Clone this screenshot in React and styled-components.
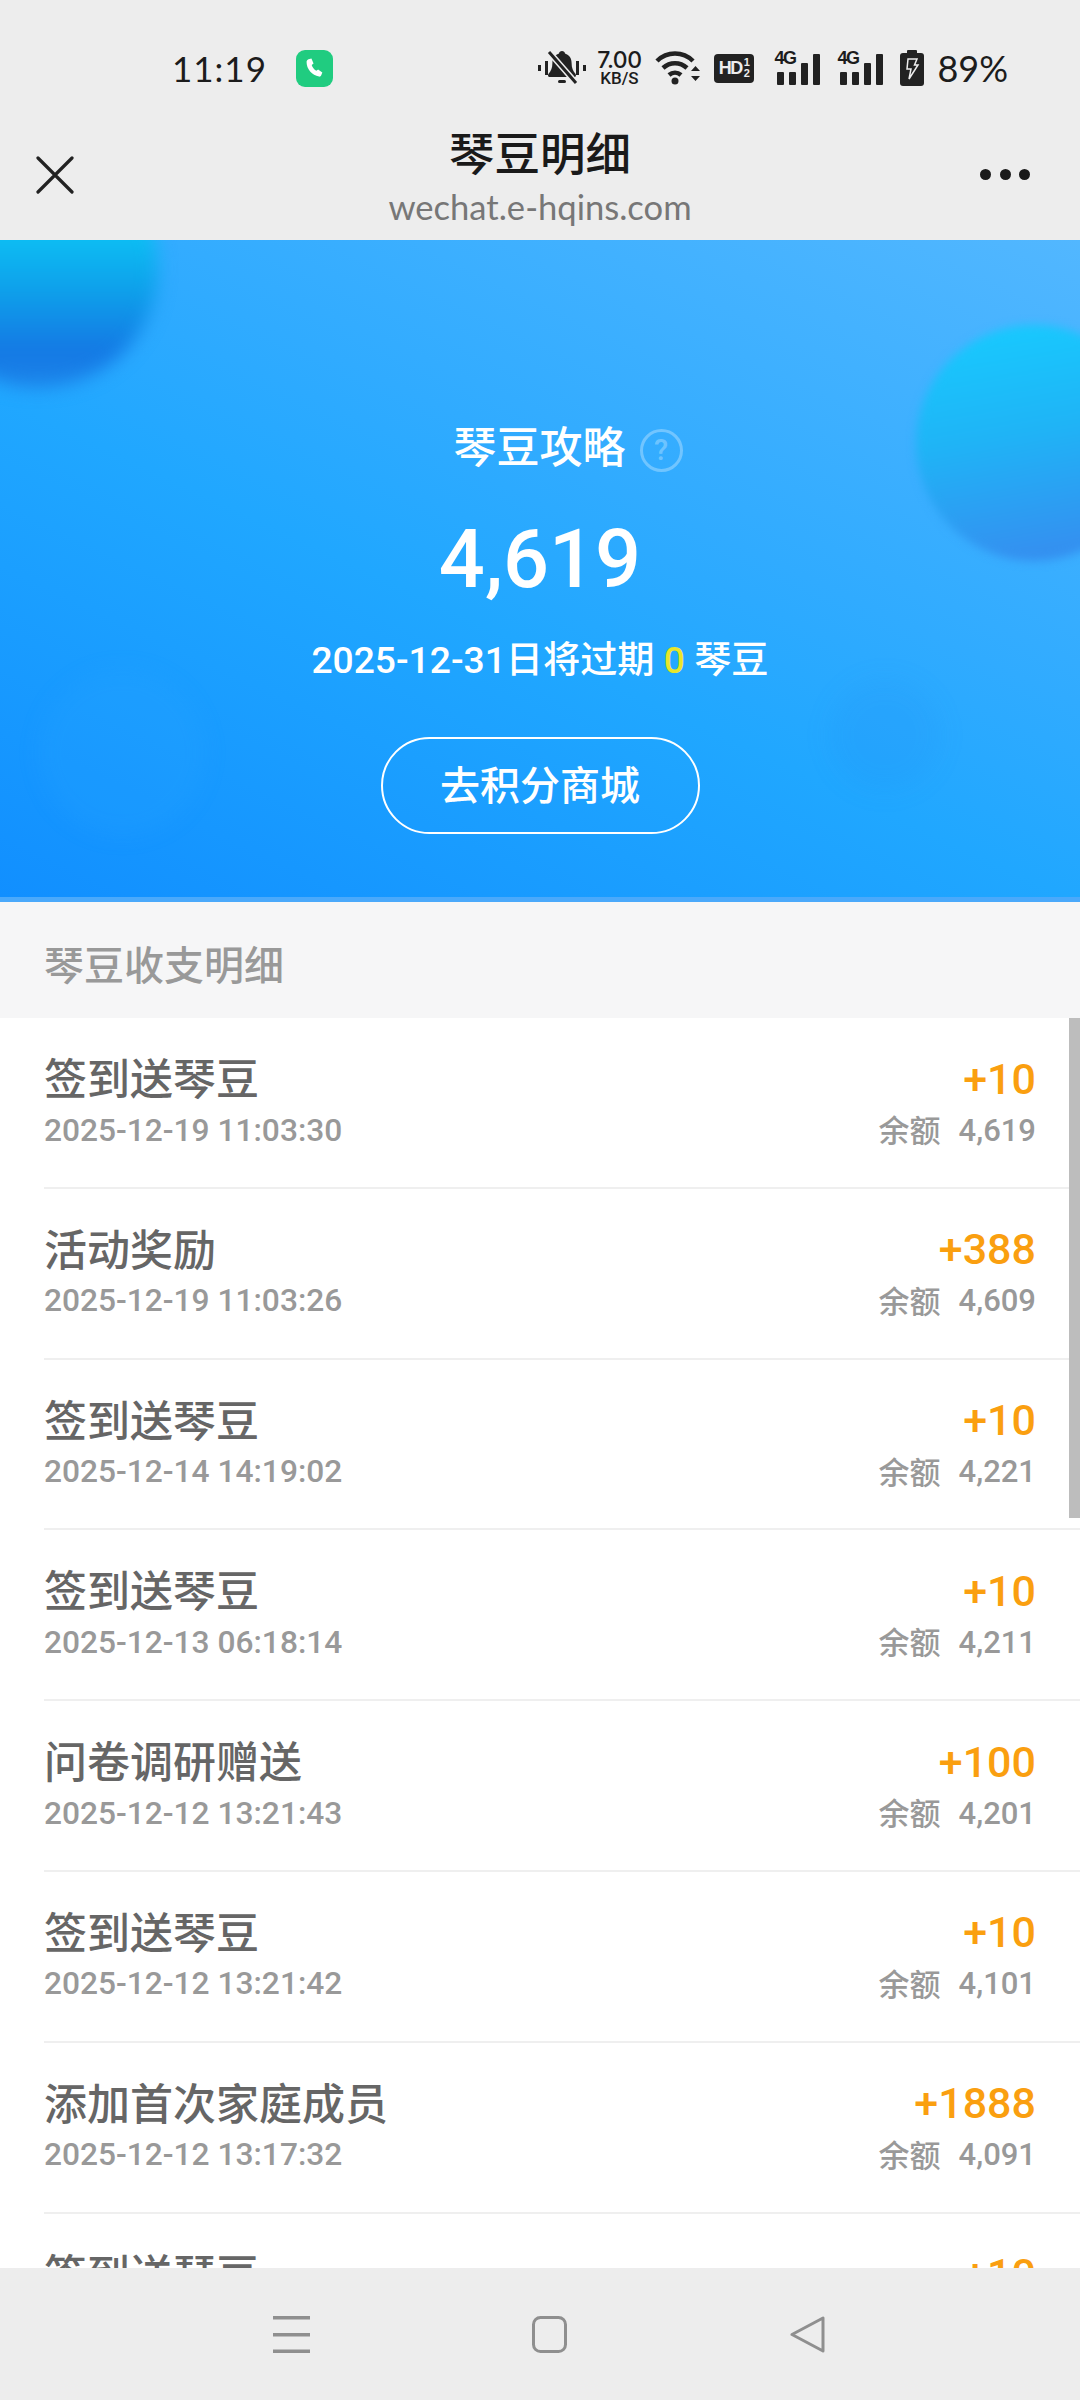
import React from "react";
import styled, { createGlobalStyle } from "styled-components";

const Global = createGlobalStyle`
  html, body { margin: 0; padding: 0; background: #fff; }
  * { box-sizing: border-box; }
  body { font-family: Roboto, "Noto Sans CJK SC", sans-serif; }
`;

const Page = styled.div`
  width: 1080px;
  height: 2400px;
  display: flex;
  flex-direction: column;
  overflow: hidden;
`;

const Top = styled.div`
  background: #ededed;
  height: 240px;
  flex: none;
`;

const StatusBar = styled.div`
  height: 106px;
  padding: 30px 72px 0 172px;
  display: flex;
  align-items: center;
  color: #1c1c1c;
`;

const Time = styled.span`
  font: 400 35px/1 Lato, sans-serif;
  letter-spacing: 1px;
`;

const CallBadge = styled.div`
  width: 37px;
  height: 37px;
  margin-left: 29px;
  border-radius: 9px;
  background: #20cc80;
  display: flex;
  align-items: center;
  justify-content: center;
`;

const StatusIcons = styled.div`
  margin-left: auto;
  display: flex;
  align-items: center;
`;

const Speed = styled.div`
  width: 50px;
  margin: 0 11px 0 8px;
  display: flex;
  flex-direction: column;
  align-items: center;
  font: 500 23px/20px Inter, sans-serif;
  letter-spacing: -0.5px;
  small {
    font: 500 17px/16px Roboto, sans-serif;
    letter-spacing: 0;
  }
`;

const HdBadge = styled.div`
  width: 40px;
  height: 29px;
  margin: 0 20px 0 13px;
  background: #222;
  border-radius: 4px;
  color: #ededed;
  display: flex;
  align-items: center;
  justify-content: center;
  font: 700 18px/1 "Liberation Sans", sans-serif;
  letter-spacing: -1.5px;
`;

const Fraction = styled.span`
  display: flex;
  flex-direction: column;
  align-items: center;
  margin-left: 2px;
  font-size: 11px;
  line-height: 11px;
  letter-spacing: 0;
`;

const SignalWrap = styled.div`
  position: relative;
  width: 46px;
  height: 33px;
  margin-right: 17px;
  span {
    position: absolute;
    left: 0;
    top: -3px;
    font: 700 18px/1 "Liberation Sans", sans-serif;
    letter-spacing: -1.5px;
  }
  svg {
    display: block;
  }
`;

const Percent = styled.span`
  margin-left: 13px;
  font: 400 36px/1 Lato, sans-serif;
`;

const NavBar = styled.div`
  height: 134px;
  padding: 0 50px;
  display: grid;
  grid-template-columns: 50px 1fr 50px;
  align-items: center;
`;

const CloseIcon = styled.svg`
  display: block;
  margin: 4px 0 0 -14px;
`;

const NavCenter = styled.div`
  text-align: center;
  margin-top: 8px;
`;

const NavTitle = styled.div`
  font-size: 45.5px;
  line-height: 60px;
  font-weight: 500;
  color: #1a1a1a;
`;

const NavHost = styled.div`
  font: 400 34.6px/42px Lato, sans-serif;
  color: #777;
`;

const Dots = styled.div`
  display: flex;
  justify-content: space-between;
  margin-top: 2px;
  span {
    width: 11px;
    height: 11px;
    border-radius: 50%;
    background: #1a1a1a;
  }
`;

const Hero = styled.div`
  position: relative;
  height: 662px;
  flex: none;
  overflow: hidden;
  display: flex;
  flex-direction: column;
  align-items: center;
  padding-top: 176px;
  color: #fff;
  background: linear-gradient(25deg, #118fff 0%, #20a7ff 43%, #30abff 60%, #52b7ff 100%);
  border-bottom: 5px solid #4aa9fb;
`;

const Ball = styled.div`
  position: absolute;
  left: ${(p) => p.$x}px;
  top: ${(p) => p.$y}px;
  width: ${(p) => p.$size}px;
  height: ${(p) => p.$size}px;
  border-radius: 50%;
  filter: blur(${(p) => p.$blur || 4}px);
  background: ${(p) => p.$bg};
`;

const HeroTitle = styled.div`
  position: relative;
  display: flex;
  align-items: center;
  font-size: 43px;
  line-height: 64px;
  font-weight: 500;
  margin-left: 56px;
`;

const Help = styled.span`
  width: 43px;
  height: 43px;
  margin-left: 14px;
  margin-top: 4px;
  border-radius: 50%;
  border: 3px solid rgba(255, 255, 255, 0.3);
  color: rgba(255, 255, 255, 0.3);
  display: flex;
  align-items: center;
  justify-content: center;
  font-size: 29px;
  line-height: 1;
`;

const Total = styled.div`
  position: relative;
  font-size: 81px;
  line-height: 100px;
  font-weight: 500;
  margin-top: 30px;
`;

const Expire = styled.div`
  position: relative;
  font-size: 37.2px;
  line-height: 50px;
  font-weight: 500;
  margin-top: 25px;
  b {
    color: #e8e62a;
    font-weight: 500;
  }
`;

const ShopButton = styled.div`
  position: relative;
  width: 319px;
  height: 97px;
  margin-top: 52px;
  padding-bottom: 5px;
  border: 2px solid #fff;
  border-radius: 49px;
  display: flex;
  align-items: center;
  justify-content: center;
  font-size: 40px;
  font-weight: 500;
`;

const SectionHead = styled.div`
  height: 116px;
  flex: none;
  padding: 5px 0 0 44px;
  display: flex;
  align-items: center;
  background: #f6f6f7;
  color: #999;
  font-size: 40px;
  font-weight: 500;
`;

const ListWrap = styled.div`
  position: relative;
  flex: 1;
  min-height: 0;
  overflow: hidden;
  background: #fff;
`;

const ScrollThumb = styled.div`
  position: absolute;
  top: 0;
  right: 0;
  width: 11px;
  height: 500px;
  background: #bdbdbd;
`;

const Row = styled.div`
  height: 170.8px;
  margin-left: 44px;
  padding: 26px 44px 0 0;
  border-bottom: 2px solid #efefef;
  display: grid;
  grid-template-columns: 1fr auto;
  grid-template-rows: 64px 44px;
  align-items: center;
`;

const RowTitle = styled.div`
  font-size: 43px;
  font-weight: 500;
  color: #666;
`;

const Amount = styled.div`
  justify-self: end;
  margin-top: 5px;
  font-size: 43px;
  font-weight: 500;
  color: #fa9f10;
`;

const RowDate = styled.div`
  font-size: 31.7px;
  font-weight: 500;
  color: #999;
`;

const Balance = styled.div`
  justify-self: end;
  display: flex;
  align-items: center;
  gap: 18px;
  font-size: 31px;
  font-weight: 500;
  color: #999;
  em {
    font-style: normal;
    font-size: 31px;
    margin-top: -3px;
  }
`;

const BottomNav = styled.div`
  height: 132px;
  flex: none;
  background: #ededed;
  position: relative;
  display: grid;
  grid-template-columns: 273px 37px 222px 34px 224px 34px;
  padding-top: 48px;
  svg {
    display: block;
  }
`;

const rows = [
  ["签到送琴豆", "+10", "2025-12-19 11:03:30", "4,619"],
  ["活动奖励", "+388", "2025-12-19 11:03:26", "4,609"],
  ["签到送琴豆", "+10", "2025-12-14 14:19:02", "4,221"],
  ["签到送琴豆", "+10", "2025-12-13 06:18:14", "4,211"],
  ["问卷调研赠送", "+100", "2025-12-12 13:21:43", "4,201"],
  ["签到送琴豆", "+10", "2025-12-12 13:21:42", "4,101"],
  ["添加首次家庭成员", "+1888", "2025-12-12 13:17:32", "4,091"],
  ["签到送琴豆", "+10", "2025-12-12 13:17:30", "4,081"],
];

const Signal = () => (
  <SignalWrap>
    <span>4G</span>
    <svg width="46" height="33" viewBox="0 0 46 33" fill="#222">
      <rect x="3" y="20" width="7" height="13" rx="1" />
      <rect x="15" y="20" width="7" height="13" rx="1" />
      <rect x="27" y="11" width="7" height="22" rx="1" />
      <rect x="39" y="2" width="7" height="31" rx="1" />
    </svg>
  </SignalWrap>
);

const App = () => {
  return (
    <Page>
      <Global />
      <Top>
        <StatusBar>
          <Time>11:19</Time>
          <CallBadge>
            <svg width="22" height="22" viewBox="0 0 24 24" fill="#fff">
              <path d="M6 2.5l3.2-.8 2.3 5.4-2 1.7c.8 2.6 2.6 4.9 5 6.3l2-1.5 4.6 3.2-1.2 3.2c-.4 1-1.4 1.6-2.4 1.4C10 20.300 3.700 13 3.900 5.300 4 4 4.800 2.900 6 2.500z" />
            </svg>
          </CallBadge>
          <StatusIcons>
            <svg width="48" height="36" viewBox="0 0 48 36" fill="#222">
              <rect x="0" y="15" width="3" height="6" />
              <rect x="7" y="11" width="3" height="14" />
              <rect x="38" y="11" width="3" height="14" />
              <rect x="45" y="15" width="3" height="6" />
              <path d="M24 1c-1.500 0-3 1-3 2.600-4.500 1.400-6.600 5-6.600 9.400 0 5-1.400 8-4 11-.8 1-.3 3 1 3h25.200c1.300 0 1.800-2 1-3-2.600-3-4-6-4-11 0-4.400-2.100-8-6.600-9.400C27 2 25.500 1 24 1z" />
              <rect x="20" y="30" width="8" height="3" rx="1.500" />
              <path d="M11 2l27 31" stroke="#ededed" strokeWidth="6" />
              <path d="M11 2l27 31" stroke="#222" strokeWidth="3" />
            </svg>
            <Speed>
              7.00
              <small>KB/S</small>
            </Speed>
            <svg width="46" height="36" viewBox="0 0 46 36" fill="none" stroke="#222" strokeWidth="4.500">
              <path d="M2 11c10-10 26-10 36 0" />
              <path d="M8 18c7-6.500 17-6.500 24 0" />
              <path d="M14 25c3.500-3 8.500-3 12 0" />
              <circle cx="20" cy="31" r="3.500" fill="#222" stroke="none" />
              <path d="M36 21l4.500-5 4.500 5zM36 26l4.500 5 4.500-5z" fill="#222" stroke="none" />
            </svg>
            <HdBadge>
              HD
              <Fraction>
                <span>1</span>
                <span>2</span>
              </Fraction>
            </HdBadge>
            <Signal />
            <Signal />
            <svg width="24" height="36" viewBox="0 0 24 36" fill="#222">
              <rect x="7" y="0" width="10" height="4" rx="1" />
              <rect x="0" y="3" width="24" height="33" rx="3" />
              <path d="M8 9h9l-2.500 6H18l-9 14 2-10H7z" fill="none" stroke="#ededed" strokeWidth="1.500" />
            </svg>
            <Percent>89%</Percent>
          </StatusIcons>
        </StatusBar>
        <NavBar>
          <CloseIcon width="38" height="38" viewBox="0 0 38 38" stroke="#222" strokeWidth="3.200" strokeLinecap="round">
            <path d="M2 2l34 34M36 2L2 36" />
          </CloseIcon>
          <NavCenter>
            <NavTitle>琴豆明细</NavTitle>
            <NavHost>wechat.e-hqins.com</NavHost>
          </NavCenter>
          <Dots>
            <span />
            <span />
            <span />
          </Dots>
        </NavBar>
      </Top>
      <Hero>
        <Ball $x={-82} $y={-92} $size={240} $blur={9} $bg="linear-gradient(180deg, #0ac3f6 0%, #0cc0f4 35%, #0e9fea 60%, #1478e4 85%, #1d85ea 100%)" />
        <Ball $x={916} $y={85} $size={236} $blur={5} $bg="linear-gradient(170deg, #17ccff 0%, #1fb4f6 45%, #3490f0 90%)" />
        <Ball $x={40} $y={430} $size={165} $blur={10} $bg="rgba(40, 165, 255, 0.2)" />
        <Ball $x={830} $y={440} $size={110} $blur={12} $bg="rgba(30, 130, 235, 0.1)" />
        <HeroTitle>
          琴豆攻略
          <Help>?</Help>
        </HeroTitle>
        <Total>4,619</Total>
        <Expire>
          2025-12-31日将过期 <b>0</b> 琴豆
        </Expire>
        <ShopButton>去积分商城</ShopButton>
      </Hero>
      <SectionHead>琴豆收支明细</SectionHead>
      <ListWrap>
        {rows.map((r, i) => (
          <Row key={i}>
            <RowTitle>{r[0]}</RowTitle>
            <Amount>{r[1]}</Amount>
            <RowDate>{r[2]}</RowDate>
            <Balance>
              <em>余额</em>
              {r[3]}
            </Balance>
          </Row>
        ))}
        <ScrollThumb />
      </ListWrap>
      <BottomNav>
        <span />
        <svg width="37" height="37" viewBox="0 0 37 37" fill="#8f8f8f">
          <rect y="0" width="37" height="3.500" />
          <rect y="17" width="37" height="3.500" />
          <rect y="33.500" width="37" height="3.500" />
        </svg>
        <span />
        <svg width="35" height="37" viewBox="0 0 35 37" fill="none" stroke="#8f8f8f" strokeWidth="3">
          <rect x="1.500" y="1.500" width="32" height="34" rx="7" />
        </svg>
        <span />
        <svg width="35" height="37" viewBox="0 0 35 37" fill="none" stroke="#8f8f8f" strokeWidth="3" strokeLinejoin="round">
          <path d="M33 2v33L2 18.500z" />
        </svg>
      </BottomNav>
    </Page>
  );
};

export default App;
